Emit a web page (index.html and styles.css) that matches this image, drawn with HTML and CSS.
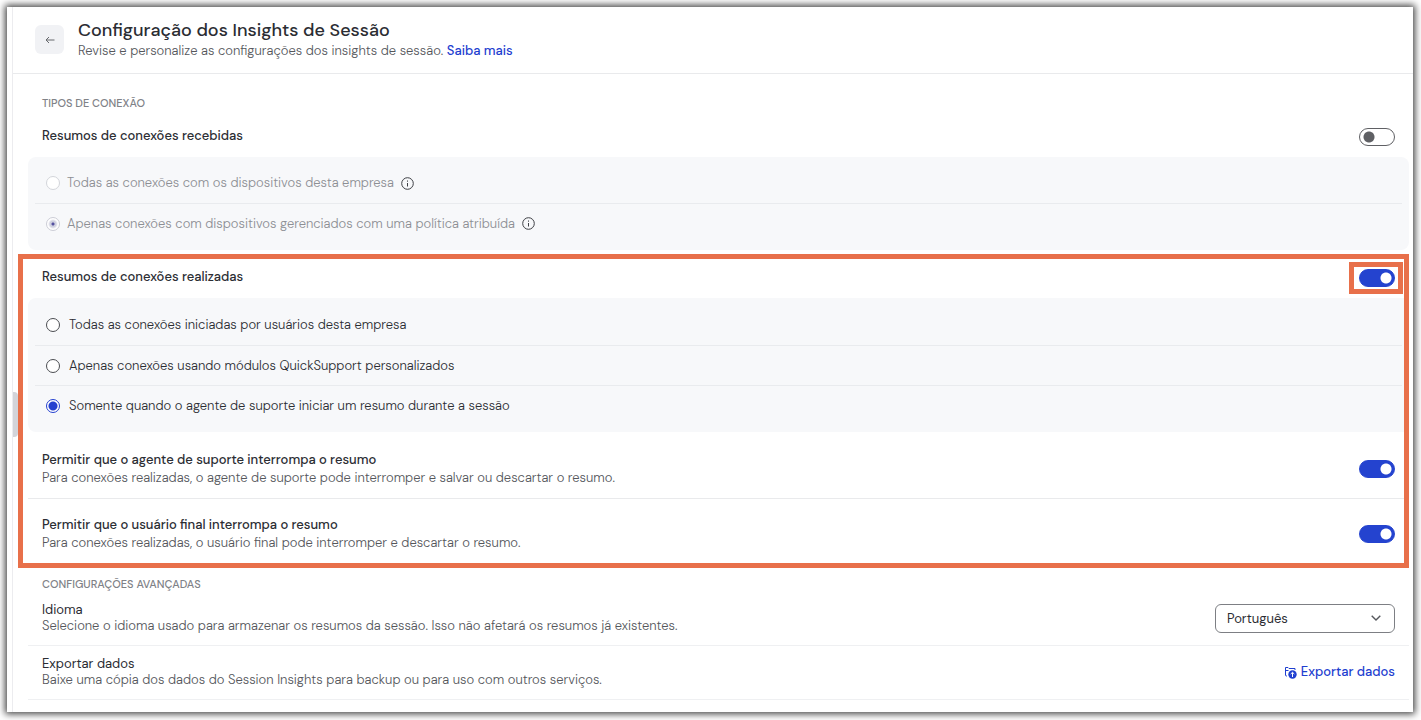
FILE: index.html
```
<!DOCTYPE html>
<html lang="pt">
<head>
<meta charset="UTF-8">
<title>Configuração dos Insights de Sessão</title>
<link rel="stylesheet" href="styles.css">
</head>
<body>

<div class="window">
<div class="page">
<div class="side-handle"></div>

<header class="header">
    <button class="back" type="button" aria-label="Voltar">
        <svg width="10" height="10" viewBox="0 0 10 10"><path d="M9.500 5H1M4 2L1 5l3 3"/></svg>
    </button>
    <div>
        <h1>Configuração dos Insights de Sessão</h1>
        <p>Revise e personalize as configurações dos insights de sessão. <a href="#">Saiba mais</a></p>
    </div>
</header>

<main class="content">
    <section class="incoming">
        <h2>TIPOS DE CONEXÃO</h2>
        <div class="row">
            <label class="name" for="incoming">Resumos de conexões recebidas</label>
            <input class="toggle" type="checkbox" id="incoming">
        </div>
        <div class="panel disabled">
            <div class="option">
                <input type="radio" name="in" id="in_all" disabled>
                <label for="in_all">Todas as conexões com os dispositivos desta empresa</label>
                <svg class="info" width="13" height="13" viewBox="0 0 13 13"><circle cx="6.500" cy="6.500" r="5.800"/><path d="M6.500 6v3.500M6.500 3.500v1.200"/></svg>
            </div>
            <div class="option">
                <input type="radio" name="in" id="in_managed" checked disabled>
                <label for="in_managed">Apenas conexões com dispositivos gerenciados com uma política atribuída</label>
                <svg class="info" width="13" height="13" viewBox="0 0 13 13"><circle cx="6.500" cy="6.500" r="5.800"/><path d="M6.500 6v3.500M6.500 3.500v1.200"/></svg>
            </div>
        </div>
    </section>

    <section class="highlight">
        <div class="row">
            <label class="name" for="outgoing">Resumos de conexões realizadas</label>
            <div class="marked"><input class="toggle" type="checkbox" id="outgoing" checked></div>
        </div>
        <div class="panel">
            <div class="option">
                <input type="radio" name="out" id="out_all">
                <label for="out_all">Todas as conexões iniciadas por usuários desta empresa</label>
            </div>
            <div class="option">
                <input type="radio" name="out" id="out_qs">
                <label for="out_qs">Apenas conexões usando módulos QuickSupport personalizados</label>
            </div>
            <div class="option">
                <input type="radio" name="out" id="out_agent" checked>
                <label for="out_agent">Somente quando o agente de suporte iniciar um resumo durante a sessão</label>
            </div>
        </div>
        <div class="setting">
            <div>
                <label class="name" for="agent_stop">Permitir que o agente de suporte interrompa o resumo</label>
                <p>Para conexões realizadas, o agente de suporte pode interromper e salvar ou descartar o resumo.</p>
            </div>
            <input class="toggle" type="checkbox" id="agent_stop" checked>
        </div>
        <div class="setting">
            <div>
                <label class="name" for="user_stop">Permitir que o usuário final interrompa o resumo</label>
                <p>Para conexões realizadas, o usuário final pode interromper e descartar o resumo.</p>
            </div>
            <input class="toggle" type="checkbox" id="user_stop" checked>
        </div>
    </section>

    <section class="advanced">
        <h2>CONFIGURAÇÕES AVANÇADAS</h2>
        <div class="item">
            <div>
                <label for="language">Idioma</label>
                <p>Selecione o idioma usado para armazenar os resumos da sessão. Isso não afetará os resumos já existentes.</p>
            </div>
            <div class="select">
                <select id="language"><option>Português</option></select>
                <svg width="10" height="6" viewBox="0 0 10 6"><path d="M.7.7L5 5 9.300.7"/></svg>
            </div>
        </div>
        <div class="item">
            <div>
                <h3>Exportar dados</h3>
                <p>Baixe uma cópia dos dados do Session Insights para backup ou para uso com outros serviços.</p>
            </div>
            <a class="export" href="#">
                <svg width="13" height="13" viewBox="0 0 13 13"><path d="M3 10H2.500a1 1 0 0 1-1-1V1.500H4l1 1h6V4M1.500 4.500h3"/><circle cx="8.500" cy="8.500" r="4.200"/><path class="arrow" d="M8.500 11V6.500M6.700 8l1.800-1.700L10.300 8"/></svg>
                Exportar dados
            </a>
        </div>
    </section>
</main>
</div>
</div>

</body>
</html>
```
FILE: styles.css
```
* {box-sizing:border-box;}
body {margin:0;padding:7px 8px 8px 7px;background:#fff;color:#2b2d33;font-family:"DM Sans",Inter,"Liberation Sans",sans-serif;font-size:13px;line-height:18px;font-optical-sizing:none;}
h1,h2,h3,p {margin:0;}
h1,h2 {font-optical-sizing:auto;}
p {color:#55575c;font-weight:300;}
a {color:#1f3fd0;text-decoration:none;font-weight:500;}
svg {fill:none;stroke:currentColor;flex:none;}

.window {min-height:calc(100vh - 15px);padding-left:5px;background:#fff;box-shadow:0 0 7px 2px #444;}
.page {position:relative;min-height:calc(100vh - 15px);border-left:1px solid #ececef;}
.side-handle {position:absolute;left:0;top:385px;width:5px;height:45px;background:#d3d4d9;border-radius:0 4px 4px 0;}

.header {display:flex;align-items:center;gap:14px;padding:12px 22px 13px;border-bottom:1px solid #e9eaec;}
.header h1 {margin-bottom:1px;font-size:18px;line-height:22px;font-weight:500;}
.back {display:flex;align-items:center;justify-content:center;width:29px;height:29px;padding:0;border:none;border-radius:6px;background:#f1f2f5;color:#66686d;}

.content {padding-left:5px;}
h2 {font-size:11px;line-height:16px;font-weight:500;color:#808287;}
.incoming {padding:21px 4px 4px 10px;}
.incoming h2,.advanced h2 {padding-left:14px;}
.incoming .row {margin-top:7px;padding-right:14px;}
.row {display:flex;align-items:center;justify-content:space-between;height:37px;margin-bottom:2px;padding:0 9px 0 14px;}
.row .name {padding-bottom:2px;}
.name {font-weight:500;}

.panel {padding:7px;background:#f7f8fa;border-radius:8px;}
.option {display:flex;align-items:center;height:40px;padding-left:11px;gap:9px;font-weight:300;}
.option + .option {border-top:1px solid #e9ebee;}
.option input {appearance:none;width:14px;height:14px;margin:0;border:1px solid #4b4d52;border-radius:50%;background:#fff;}
.option input:checked {border-color:#2440cf;background:radial-gradient(circle,#2440cf 4px,#fff 5px);}
.disabled {padding:6px 7px 7px;}
.disabled .option {gap:7px;color:#8d8f94;}
.disabled .option input {border-color:#d3d5da;}
.disabled .option input:checked {border-color:#cccdd6;background:radial-gradient(circle,#5450a0 1px,#cfd0df 2px,#cfd0df 3px,#fff 5px);}
.info {color:#3d3f44;}

.toggle {appearance:none;flex:none;display:block;width:36px;height:18px;margin:0;border:1px solid #5f6064;border-radius:9px;background:radial-gradient(circle at 9px 8px,#5f6064 5px,#fff 6px);}
.toggle:checked {border-color:#2443cf;background:radial-gradient(circle at 26px 8px,#fff 5px,#2443cf 6px);}

/* orange frames around the block and its switch */
.highlight {margin-right:4px;padding-left:5px;border:5px solid #e8704a;}
.highlight .panel {padding-right:2px;margin-bottom:2px;border-radius:8px 0 0 8px;}
.marked {position:relative;}
.marked::after {content:"";position:absolute;inset:-7px -8px -7px -10px;border:5px solid #e8704a;pointer-events:none;}

.setting {display:flex;align-items:center;justify-content:space-between;padding:17px 9px 11px 14px;}
.setting + .setting {border-top:1px solid #e9eaec;}
.setting .name {display:block;}

.advanced {padding:8px 4px 0 10px;}
.item {display:flex;align-items:center;justify-content:space-between;padding:10px 14px 11px;border-bottom:1px solid #eff0f2;line-height:16px;}
.item label {display:block;}
.item h3 {font-size:13px;font-weight:400;}
.select {position:relative;width:180px;}
.select select {appearance:none;display:block;width:100%;height:29px;padding:2px 11px 0;border:1px solid #7d7f84;border-radius:6px;background:#fff;color:#2b2d33;font:inherit;}
.select svg {position:absolute;right:14px;top:11px;color:#55575c;stroke-width:1.4;pointer-events:none;}
.export {display:flex;align-items:center;gap:4px;}
.export circle {fill:currentColor;stroke:none;}
.export .arrow {stroke:#fff;}
```
